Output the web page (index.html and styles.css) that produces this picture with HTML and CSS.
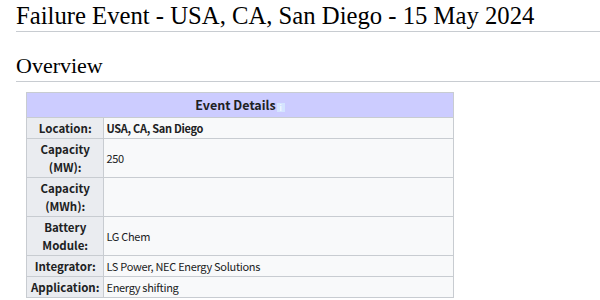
FILE: index.html
```html
<!DOCTYPE html>
<html>
<head>
<meta charset="utf-8">
<link rel="stylesheet" href="styles.css">
</head>
<body>
<div class="content">
  <h1 class="title">Failure Event - USA, CA, San Diego - 15 May 2024</h1>
  <h2 class="section">Overview</h2>
  <table class="infobox">
    <tr>
      <th class="head" colspan="2">Event Details<span class="info">i</span></th>
    </tr>
    <tr>
      <th class="label">Location:</th>
      <td class="value strong">USA, CA, San Diego</td>
    </tr>
    <tr class="tall">
      <th class="label">Capacity<br>(MW):</th>
      <td class="value">250</td>
    </tr>
    <tr class="tall">
      <th class="label">Capacity<br>(MWh):</th>
      <td class="value"></td>
    </tr>
    <tr class="tall">
      <th class="label">Battery<br>Module:</th>
      <td class="value">LG Chem</td>
    </tr>
    <tr>
      <th class="label">Integrator:</th>
      <td class="value">LS Power, NEC Energy Solutions</td>
    </tr>
    <tr>
      <th class="label">Application:</th>
      <td class="value">Energy shifting</td>
    </tr>
  </table>
</div>
</body>
</html>
```

FILE: styles.css
```css
html, body {
  margin: 0;
  padding: 0;
  background: #ffffff;
}

.content {
  padding-left: 16px;
  color: #202122;
}

.title {
  font-family: "Liberation Serif", "Times New Roman", serif;
  font-weight: normal;
  font-size: 24.7px;
  line-height: 30px;
  white-space: nowrap;
  margin: 0;
  padding-top: 1px;
  border-bottom: 1px solid #c8ccd1;
  color: #000;
}

.section {
  font-family: "Liberation Serif", "Times New Roman", serif;
  font-weight: normal;
  font-size: 22px;
  line-height: 26px;
  margin: 21px 0 0 0;
  padding-bottom: 2px;
  border-bottom: 1px solid #c8ccd1;
  color: #000;
}

.infobox {
  margin: 10px 0 0 10px;
  width: 428px;
  border-collapse: collapse;
  border: 1px solid #c8ccd1;
  font-family: "Noto Sans CJK KR", "Noto Sans", sans-serif;
  font-size: 11.5px;
  line-height: 18px;
  color: #202122;
}

.infobox th,
.infobox td {
  border: 1px solid #c8ccd1;
  padding: 1px 4px;
}

.head {
  background: #ccccff;
  font-size: 12.5px;
  height: 22px;
  text-align: center;
}

.info {
  display: inline-block;
  width: 8px;
  height: 9px;
  margin-left: 1px;
  background: #d4e4ff;
  color: #ffffff;
  font-size: 8px;
  line-height: 9px;
  text-align: center;
  vertical-align: -1px;
  font-weight: normal;
}

.label {
  background: #eaecf0;
  width: 65px;
  text-align: center;
  font-weight: bold;
}

.infobox .value {
  background: #f8f9fa;
  text-align: left;
  padding-left: 2px;
  font-size: 11px;
  letter-spacing: -0.3px;
}

.strong {
  font-weight: bold;
}

.tall th,
.tall td {
  height: 35px;
}
```
